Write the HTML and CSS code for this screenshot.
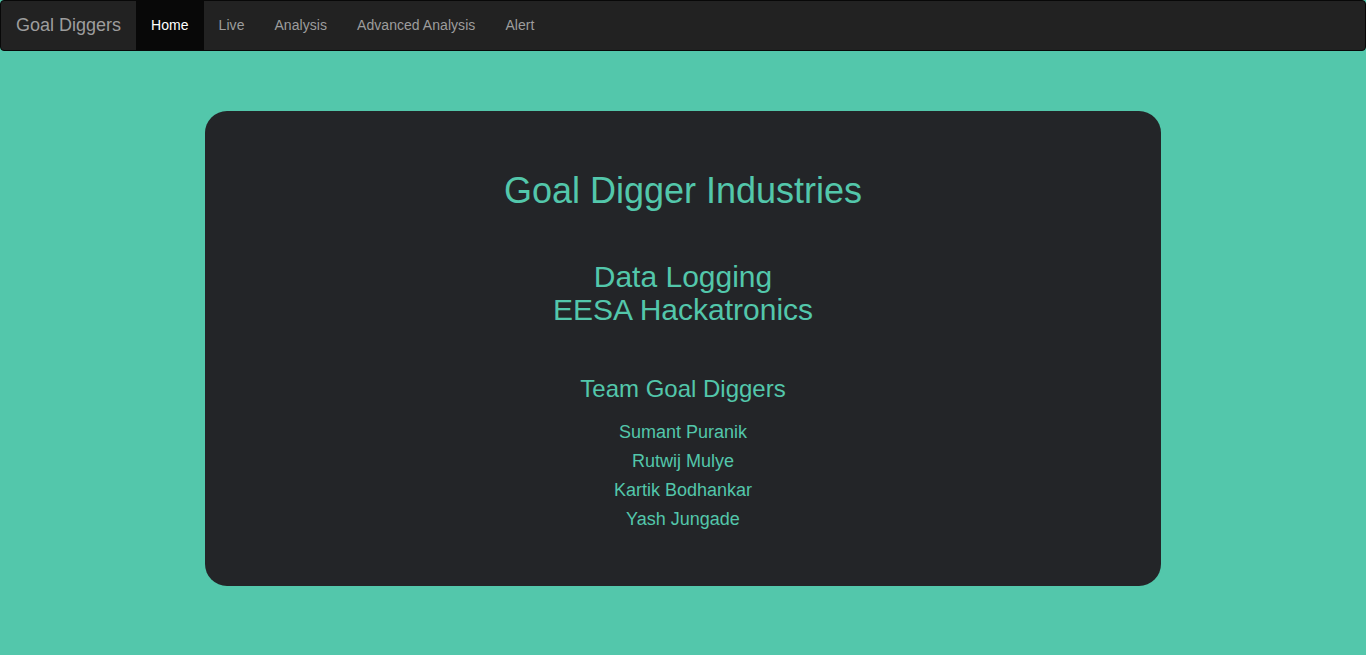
FILE: index.html
```html
<!DOCTYPE html>
<html>
<head>
<meta charset="utf-8">
<title>Goal Diggers</title>
<link rel="stylesheet" href="styles.css">
</head>
<body>
<nav class="navbar">
  <a class="brand" href="#">Goal Diggers</a>
  <ul class="nav">
    <li class="active"><a href="#">Home</a></li>
    <li><a href="#">Live</a></li>
    <li><a href="#">Analysis</a></li>
    <li><a href="#">Advanced Analysis</a></li>
    <li><a href="#">Alert</a></li>
  </ul>
</nav>
<main class="page">
  <section class="card">
    <h1 class="title">Goal Digger Industries</h1>
    <h2 class="subtitle">Data Logging<br>EESA Hackatronics</h2>
    <h3 class="team">Team Goal Diggers</h3>
    <ul class="members">
      <li>Sumant Puranik</li>
      <li>Rutwij Mulye</li>
      <li>Kartik Bodhankar</li>
      <li>Yash Jungade</li>
    </ul>
  </section>
</main>
</body>
</html>
```
FILE: styles.css
```css
* { box-sizing: border-box; }
html, body {
  margin: 0;
  padding: 0;
}
body {
  background: #53c7ab;
  font-family: "Liberation Sans", Arial, Helvetica, sans-serif;
  font-size: 14px;
  line-height: 1.42857;
  min-height: 655px;
}
.navbar {
  display: flex;
  align-items: stretch;
  height: 51px;
  background: #222222;
  border: 1px solid #080808;
  border-radius: 4px;
}
.brand {
  display: block;
  padding: 14px 15px 16px;
  height: 50px;
  font-size: 18px;
  line-height: 20px;
  color: #9d9d9d;
  text-decoration: none;
}
.nav {
  display: flex;
  list-style: none;
  margin: 0;
  padding: 0;
}
.nav a {
  display: block;
  padding: 14px 15px 16px;
  line-height: 20px;
  color: #9d9d9d;
  text-decoration: none;
  letter-spacing: 0.05px;
}
.nav .active a {
  background: #080808;
  color: #ffffff;
}
.page {
  display: flex;
  justify-content: center;
  padding-top: 60px;
}
.card {
  width: 956px;
  height: 475px;
  background: #232528;
  border-radius: 22px;
  color: #53c7ab;
  text-align: center;
  padding-top: 60px;
}
.title {
  margin: 0;
  font-size: 36px;
  font-weight: normal;
  line-height: 1.1;
}
.subtitle {
  margin: 49px 0 0;
  font-size: 30px;
  font-weight: normal;
  line-height: 1.1;
}
.team {
  margin: 50px 0 0;
  font-size: 24px;
  font-weight: normal;
  line-height: 1.1;
}
.members {
  list-style: none;
  margin: 16px 0 0;
  padding: 0;
  font-size: 18px;
  line-height: 29px;
}
```
